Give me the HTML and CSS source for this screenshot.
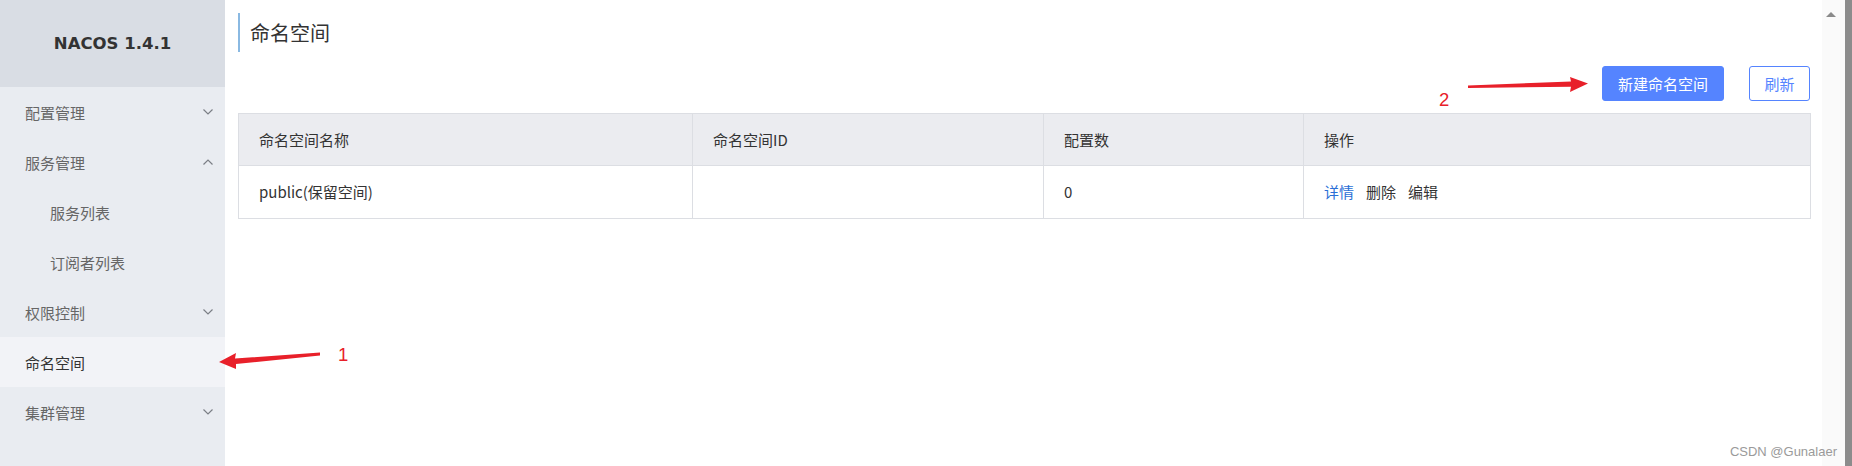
FILE: index.html
```html
<!DOCTYPE html>
<html lang="zh-CN">
<head>
<meta charset="utf-8">
<title>Nacos</title>
<link rel="stylesheet" href="styles.css">
</head>
<body>
<div class="app">
  <aside class="sidebar">
    <div class="brand">NACOS 1.4.1</div>
    <ul class="menu">
      <li class="item"><span>配置管理</span><svg class="chev" viewBox="0 0 10 6"><polyline points="0.5,0.5 5,5 9.5,0.5"/></svg></li>
      <li class="item"><span>服务管理</span><svg class="chev" viewBox="0 0 10 6"><polyline points="0.5,5.5 5,1 9.5,5.5"/></svg></li>
      <li class="item sub"><span>服务列表</span></li>
      <li class="item sub"><span>订阅者列表</span></li>
      <li class="item"><span>权限控制</span><svg class="chev" viewBox="0 0 10 6"><polyline points="0.5,0.5 5,5 9.5,0.5"/></svg></li>
      <li class="item active"><span>命名空间</span></li>
      <li class="item"><span>集群管理</span><svg class="chev" viewBox="0 0 10 6"><polyline points="0.5,0.5 5,5 9.5,0.5"/></svg></li>
    </ul>
  </aside>
  <main class="main">
    <h1 class="title">命名空间</h1>
    <div class="toolbar">
      <button class="btn primary">新建命名空间</button>
      <button class="btn outline">刷新</button>
    </div>
    <table class="grid">
      <colgroup>
        <col class="c1"><col class="c2"><col class="c3"><col class="c4">
      </colgroup>
      <thead>
        <tr><th>命名空间名称</th><th>命名空间ID</th><th>配置数</th><th>操作</th></tr>
      </thead>
      <tbody>
        <tr>
          <td>public(保留空间)</td>
          <td></td>
          <td>0</td>
          <td><div class="actions"><a class="link">详情</a><span>删除</span><span>编辑</span></div></td>
        </tr>
      </tbody>
    </table>
  </main>
  <div class="scrollbar"><span class="up"></span></div>
  <div class="edge"></div>
</div>
<svg class="annot" width="1852" height="466" viewBox="0 0 1852 466">
  <polygon class="arrow" points="320,352.5 320,355.5 236,364 236,369 219,362 236,353 235,358.5"/>
  <text class="num" x="338" y="361">1</text>
  <polygon class="arrow" points="1468,85.5 1468,88 1571,86.8 1570,92 1588,83.5 1570,77 1571,81.5"/>
  <text class="num" x="1439" y="106">2</text>
</svg>
<div class="watermark">CSDN @Gunalaer</div>
</body>
</html>
```

FILE: styles.css
```css
* { box-sizing: border-box; }
html, body { margin: 0; padding: 0; }
body {
  width: 1852px;
  height: 466px;
  overflow: hidden;
  font-family: "Noto Sans CJK SC", "Microsoft YaHei", sans-serif;
  color: #333;
  background: #fff;
  position: relative;
}
.app {
  display: flex;
  height: 466px;
}
.sidebar {
  width: 225px;
  flex: none;
  background: #e9ecf1;
  display: flex;
  flex-direction: column;
}
.brand {
  height: 87px;
  background: #d9dde4;
  display: flex;
  align-items: center;
  justify-content: center;
  font-family: "DejaVu Sans", "Liberation Sans", sans-serif;
  font-weight: bold;
  font-size: 16.5px;
  color: #333;
}
.menu {
  list-style: none;
  margin: 0;
  padding: 0;
}
.item {
  height: 50px;
  display: flex;
  align-items: center;
  justify-content: space-between;
  padding: 0 12px 0 25px;
  font-size: 15px;
  color: #666;
}
.item.sub { padding-left: 50px; }
.item.active {
  background: #f2f3f7;
  color: #333;
}
.chev {
  width: 10px;
  height: 6px;
  fill: none;
  stroke: #7b7f86;
  stroke-width: 1.2;
}
.main {
  flex: 1;
  padding: 13px 11px 0 13px;
  min-width: 0;
}
.title {
  margin: 0;
  height: 39px;
  line-height: 39px;
  border-left: 2px solid #8ab9e2;
  padding-left: 10px;
  font-size: 20px;
  font-weight: normal;
  color: #333;
}
.toolbar {
  display: flex;
  justify-content: flex-end;
  gap: 25px;
  margin-top: 14px;
  padding-right: 1px;
}
.btn {
  height: 35px;
  border-radius: 3px;
  font-family: "Noto Sans CJK SC", sans-serif;
  font-size: 15px;
  line-height: 33px;
  border: 1px solid #5584ff;
  cursor: pointer;
}
.btn.primary {
  background: #5584ff;
  color: #fff;
  padding: 0 15px;
}
.btn.outline {
  background: #fff;
  color: #5584ff;
  padding: 0 14.5px;
}
.grid {
  margin-top: 12px;
  width: 1573px;
  table-layout: fixed;
  border-collapse: separate;
  border-spacing: 0;
  border-top: 1px solid #dcdee3;
  border-left: 1px solid #dcdee3;
  font-size: 15px;
}
.c1 { width: 454px; }
.c2 { width: 351px; }
.c3 { width: 260px; }
.c4 { width: 507px; }
.grid th, .grid td {
  text-align: left;
  padding: 0 20px;
  border-right: 1px solid #dcdee3;
  border-bottom: 1px solid #dcdee3;
  font-weight: normal;
  color: #333;
  white-space: nowrap;
}
.grid th {
  background: #ebecf0;
  height: 52px;
  line-height: 51px;
}
.grid td {
  background: #fff;
  height: 53px;
  line-height: 52px;
}
.actions {
  display: flex;
  gap: 12px;
}
.link { color: #2a6fd6; }
.scrollbar {
  width: 23px;
  flex: none;
  background: #fafafa;
  padding: 12px 0 0 4px;
}
.up {
  display: block;
  width: 0;
  height: 0;
  border-left: 5.5px solid transparent;
  border-right: 5.5px solid transparent;
  border-bottom: 5px solid #8a8a8a;
}
.edge {
  width: 7px;
  flex: none;
  background: #8c8c8c;
}
.annot {
  position: absolute;
  left: 0;
  top: 0;
  pointer-events: none;
}
.arrow { fill: #e8202a; }
.num {
  fill: #e8202a;
  font-family: "Liberation Sans", Arial, sans-serif;
  font-size: 18.5px;
}
.watermark {
  position: absolute;
  right: 15px;
  top: 444px;
  font-family: "Liberation Sans", Arial, sans-serif;
  font-size: 13px;
  color: #9a9a9a;
}
```
